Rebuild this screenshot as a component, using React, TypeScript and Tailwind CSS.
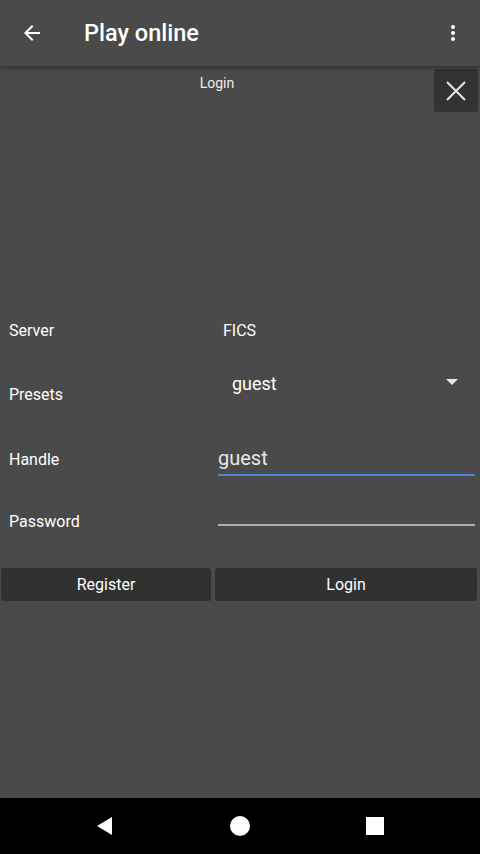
export default function App() {
  return (
    <div className="w-[480px] h-[854px] flex flex-col bg-[#4a4a4a] text-white overflow-hidden" style={{ fontFamily: 'Roboto, "Liberation Sans", sans-serif' }}>
      {/* app bar */}
      <header className="h-[66px] flex items-center shrink-0 bg-[#4a4a4a] shadow-[0_2px_4px_rgba(0,0,0,0.35)] relative z-10">
        <button className="w-[64px] h-[66px] flex items-center justify-center">
          <svg width="24" height="24" viewBox="0 0 24 24" fill="#fff">
            <path d="M20 11H7.83l5.59-5.59L12 4l-8 8 8 8 1.41-1.41L7.83 13H20v-2z" />
          </svg>
        </button>
        <h1 className="ml-[20px] pt-[2px] flex-1 text-[23.5px] font-medium">Play online</h1>
        <button className="w-[50px] h-[66px] flex items-center justify-center mr-[2px]">
          <svg width="24" height="24" viewBox="0 0 24 24" fill="#fff">
            <path d="M12 8c1.1 0 2-.9 2-2s-.9-2-2-2-2 .9-2 2 .9 2 2 2zm0 2c-1.1 0-2 .9-2 2s.9 2 2 2 2-.9 2-2-.9-2-2-2zm0 6c-1.1 0-2 .9-2 2s.9 2 2 2 2-.9 2-2-.9-2-2-2z" />
          </svg>
        </button>
      </header>

      <main className="flex-1 flex flex-col">
        {/* dialog title */}
        <div className="flex items-start mt-[3px] h-[44px]">
          <div className="flex-1 text-center text-[14px] pt-[4px] text-[#eeeeee]">Login</div>
          <button className="w-[44px] h-[43px] mr-[2px] rounded-[2px] bg-[#333333] flex items-center justify-center">
            <svg width="20" height="20" viewBox="0 0 20 20" stroke="#e6e6e6" strokeWidth="2">
              <path d="M1 1l18 18M19 1L1 19" />
            </svg>
          </button>
        </div>

        <div className="h-[198px]" />

        {/* server */}
        <div className="flex items-center h-[40px] text-[16px]">
          <div className="w-[218px] pl-[9px]">Server</div>
          <div className="pl-[5px]">FICS</div>
        </div>

        {/* presets */}
        <div className="flex h-[64px] mt-[10px] text-[16px]">
          <div className="w-[218px] pl-[9px] pt-[22px]">Presets</div>
          <div className="flex-1 flex items-start pt-[9px] pl-[14px] pr-[22px]">
            <span className="flex-1 text-[18px]">guest</span>
            <svg width="12" height="8" viewBox="0 0 12 8" className="mt-[8px]" fill="#e6e6e6">
              <path d="M0 1h12L6 7z" />
            </svg>
          </div>
        </div>

        {/* handle */}
        <div className="flex h-[64px] text-[16px]">
          <div className="w-[218px] pl-[9px] pt-[23px]">Handle</div>
          <div className="w-[257px] flex flex-col pt-[20px]">
            <span className="text-[20px] leading-[26px] text-[#e8e8e8]">guest</span>
            <div className="h-[2px] mt-[3px] bg-[#4f85dd]" />
          </div>
        </div>

        {/* password */}
        <div className="flex h-[62px] text-[16px]">
          <div className="w-[218px] pl-[9px] pt-[21px]">Password</div>
          <div className="w-[257px] flex flex-col justify-end pb-[25px]">
            <div className="h-[2px] bg-[#b0b0b0]" />
          </div>
        </div>

        {/* buttons */}
        <div className="flex gap-[4px] px-[1px] mt-[17px] text-[16px]">
          <button className="w-[210px] h-[33px] rounded-[3px] bg-[#313131]">Register</button>
          <button className="flex-1 mr-[2px] h-[33px] rounded-[3px] bg-[#313131]">Login</button>
        </div>
      </main>

      {/* system nav */}
      <nav className="h-[56px] shrink-0 bg-black flex items-center justify-center gap-[116px]">
        <svg width="18" height="20" viewBox="0 0 18 20" fill="#fff">
          <path d="M16 1v18L1 10z" />
        </svg>
        <svg width="20" height="20" viewBox="0 0 20 20" fill="#fff">
          <circle cx="10" cy="10" r="10" />
        </svg>
        <svg width="18" height="18" viewBox="0 0 18 18" fill="#fff">
          <rect width="18" height="18" />
        </svg>
      </nav>
    </div>
  );
}
